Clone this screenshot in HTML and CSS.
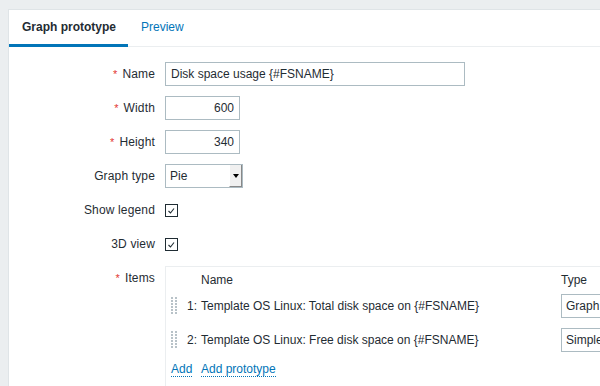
FILE: index.html
```html
<!DOCTYPE html>
<html>
<head>
<meta charset="utf-8">
<link rel="stylesheet" href="styles.css">
</head>
<body>
<div class="page">
  <div class="panel">
    <div class="tabs">
      <span class="tab active">Graph prototype</span>
      <span class="tab link">Preview</span>
    </div>
    <div class="form">
      <div class="lbl"><span class="ast">*</span>Name</div>
      <div class="field"><div class="input w-name">Disk space usage {#FSNAME}</div></div>

      <div class="lbl"><span class="ast">*</span>Width</div>
      <div class="field"><div class="input w-num num">600</div></div>

      <div class="lbl"><span class="ast">*</span>Height</div>
      <div class="field"><div class="input w-num num">340</div></div>

      <div class="lbl">Graph type</div>
      <div class="field">
        <div class="select">
          <span class="select-text">Pie</span>
          <span class="select-btn"><span class="tri"></span></span>
        </div>
      </div>

      <div class="lbl">Show legend</div>
      <div class="field">
        <span class="checkbox"><svg width="11" height="11" viewBox="0 0 11 11"><polyline points="2.5,6 4.5,8 8,3.5" fill="none" stroke="#1f2c33" stroke-width="1.1"/></svg></span>
      </div>

      <div class="lbl">3D view</div>
      <div class="field">
        <span class="checkbox"><svg width="11" height="11" viewBox="0 0 11 11"><polyline points="2.5,6 4.5,8 8,3.5" fill="none" stroke="#1f2c33" stroke-width="1.1"/></svg></span>
      </div>

      <div class="lbl lbl-top"><span class="ast">*</span>Items</div>
      <div class="field">
        <div class="items">
          <div class="irow ihead">
            <span></span><span></span>
            <span class="c-name">Name</span>
            <span class="c-type">Type</span>
          </div>
          <div class="irow irow1">
            <span class="c-handle"><span class="handle"></span></span>
            <span class="c-num">1:</span>
            <span class="c-name">Template OS Linux: Total disk space on {#FSNAME}</span>
            <span class="c-type"><span class="tsel">Graph</span></span>
          </div>
          <div class="irow irow2">
            <span class="c-handle"><span class="handle"></span></span>
            <span class="c-num">2:</span>
            <span class="c-name">Template OS Linux: Free disk space on {#FSNAME}</span>
            <span class="c-type"><span class="tsel">Simple</span></span>
          </div>
          <div class="irow iadd">
            <span class="c-add"><a class="alink">Add</a></span>
            <span class="c-name"><a class="alink">Add prototype</a></span>
          </div>
        </div>
      </div>
    </div>
  </div>
</div>
</body>
</html>
```
FILE: styles.css
```css
html, body {
  margin: 0;
  padding: 0;
  background: #ebeef0;
  overflow: hidden;
}
body {
  font-family: "Liberation Sans", Arial, sans-serif;
  font-size: 12px;
  color: #1f2c33;
}
.page {
  padding: 9px 0 0 8px;
  width: 800px;
}
.panel {
  background: #fff;
  border-top: 1px solid #dfe4e7;
  border-left: 1px solid #dfe4e7;
  height: 420px;
}
.tabs {
  display: flex;
  height: 36px;
  border-bottom: 1px solid #ebeef0;
}
.tab {
  height: 37px;
  box-sizing: border-box;
  line-height: 35px;
  padding: 0 12px 0 13px;
}
.tab.active {
  font-weight: bold;
  border-bottom: 3px solid #0275b8;
}
.tab.link {
  color: #0275b8;
}
.form {
  display: grid;
  grid-template-columns: 146px 1fr;
  column-gap: 10px;
  row-gap: 10px;
  padding-top: 15px;
}
.lbl {
  text-align: right;
  height: 24px;
  line-height: 24px;
  white-space: nowrap;
  letter-spacing: 0.15px;
}
.lbl-top {
  align-self: start;
}
.ast {
  color: #e33734;
  margin-right: 5px;
  font-size: 11px;
}
.field {
  display: flex;
  align-items: center;
  min-height: 24px;
}
.input {
  height: 24px;
  box-sizing: border-box;
  border: 1px solid #acbbc2;
  padding: 0 5px;
  line-height: 22px;
  background: #fff;
  white-space: nowrap;
}
.w-name { width: 300px; }
.w-num { width: 75px; }
.num { text-align: right; }
.select {
  position: relative;
  width: 78px;
  height: 24px;
  box-sizing: border-box;
  border: 1px solid #acbbc2;
  line-height: 22px;
}
.select-text {
  padding-left: 4px;
}
.select-btn {
  position: absolute;
  right: 0;
  top: 0;
  width: 13px;
  height: 22px;
  box-sizing: border-box;
  background: #f0f0f0;
  border-left: 1px solid #fff;
  border-right: 1px solid #888;
  border-bottom: 1px solid #888;
  display: flex;
  align-items: center;
  justify-content: center;
}
.tri {
  width: 0;
  height: 0;
  border-left: 3px solid transparent;
  border-right: 3px solid transparent;
  border-top: 4px solid #000;
  margin-top: 1px;
}
.checkbox {
  display: inline-flex;
  align-items: center;
  justify-content: center;
  width: 13px;
  height: 13px;
  box-sizing: border-box;
  border: 1px solid #1f2c33;
  background: #fff;
}
.items {
  border: 1px solid #ebeef0;
  width: 600px;
  height: 140px;
  padding-top: 5px;
  box-sizing: border-box;
}
.irow {
  display: grid;
  grid-template-columns: 16px 15px 364px auto;
  align-items: center;
  height: 24px;
  white-space: nowrap;
}
.ihead { height: 16px; }
.irow1 { margin-top: 6px; }
.irow2 { margin-top: 10px; }
.iadd { height: 16px; margin-top: 9px; }
.c-handle { padding-left: 5px; display: flex; align-items: center; }
.c-num { text-align: right; }
.c-name { padding-left: 4px; }
.c-add { grid-column: 1 / span 2; padding-left: 5px; }
.handle {
  display: block;
  width: 6px;
  height: 18px;
  background:
    linear-gradient(to bottom, transparent 2px, #fff 2px) 0 0 / 6px 3px,
    linear-gradient(to right, #b8c2c8 2px, transparent 2px, transparent 4px, #b8c2c8 4px);
}
.tsel {
  display: block;
  width: 120px;
  height: 24px;
  box-sizing: border-box;
  border: 1px solid #acbbc2;
  line-height: 22px;
  padding-left: 4px;
}
.alink {
  color: #0275b8;
  border-bottom: 1px dotted #0275b8;
  text-decoration: none;
}
```
